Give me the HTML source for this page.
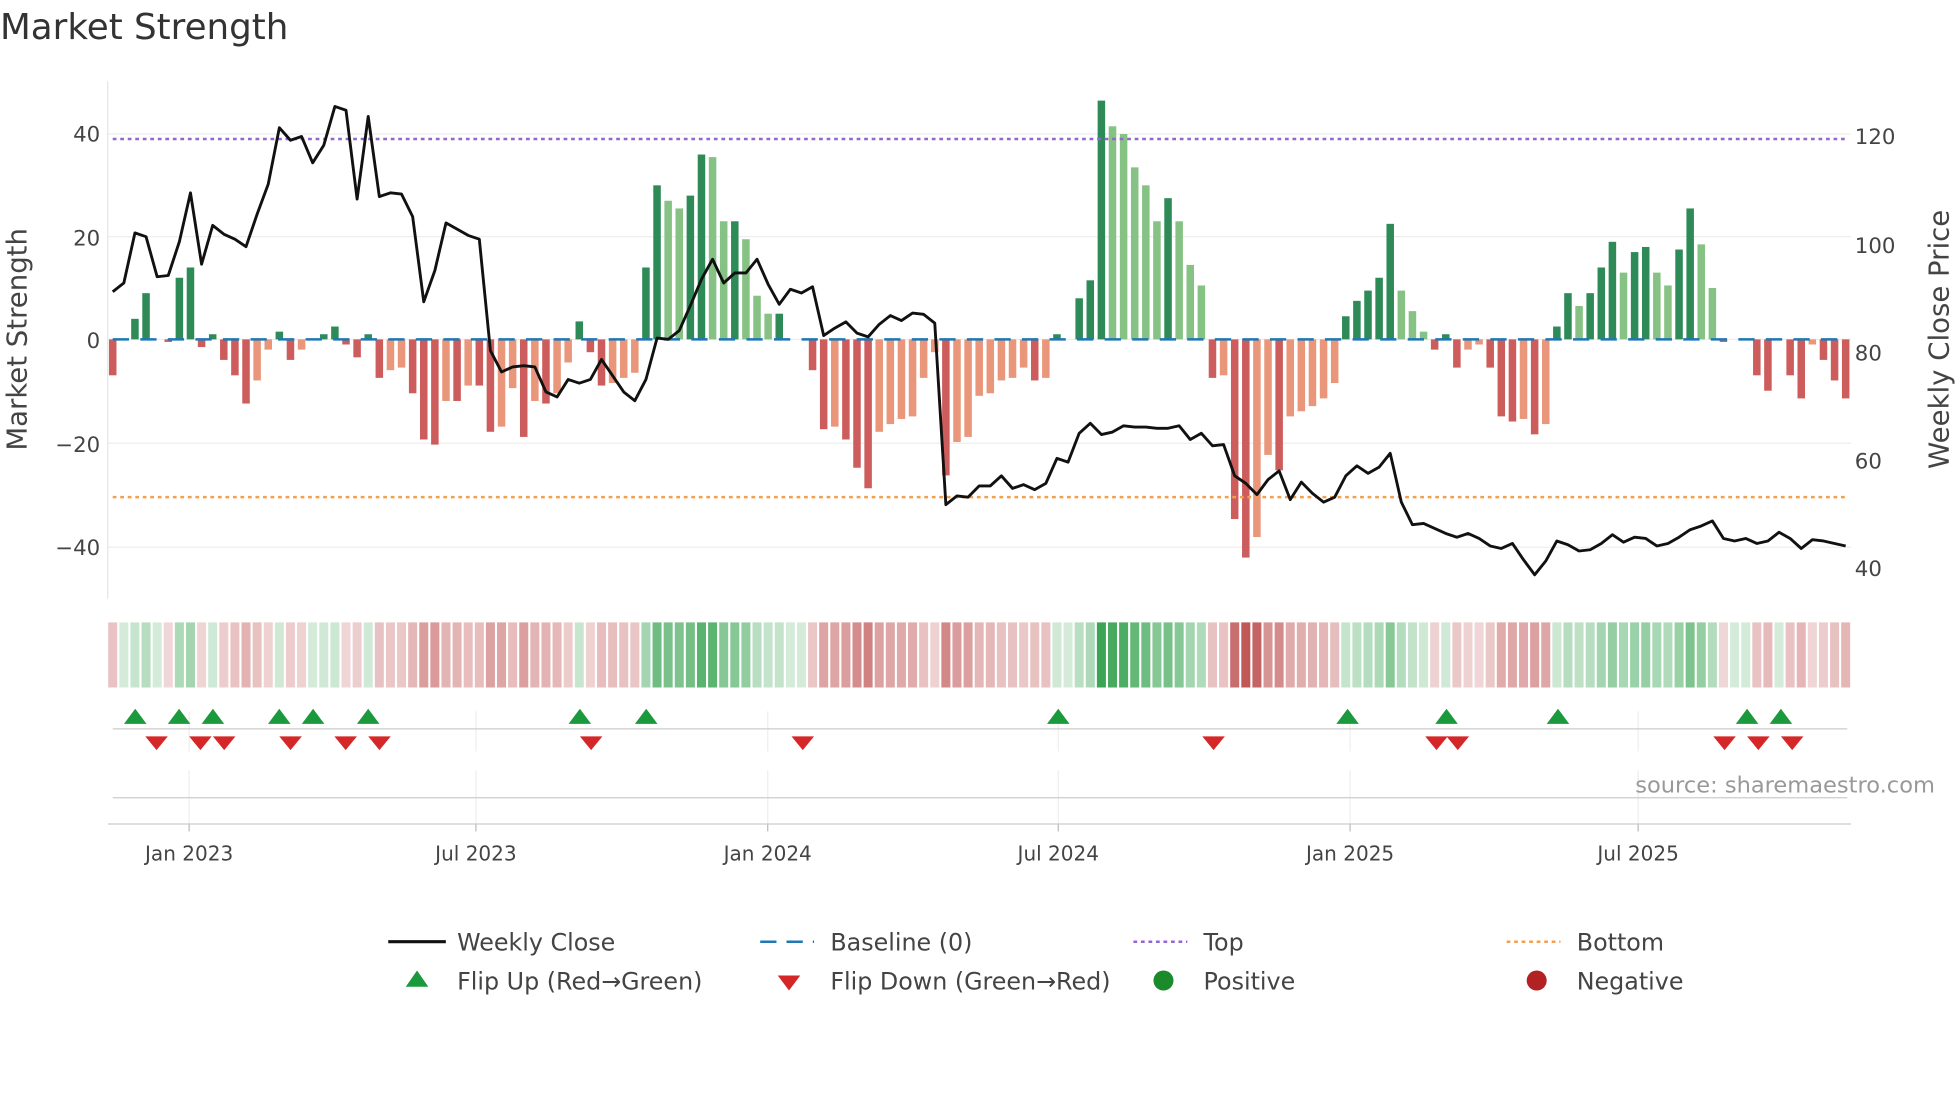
<!DOCTYPE html>
<html><head><meta charset="utf-8"><style>
html,body{margin:0;padding:0;background:#fff;width:1960px;height:1102px;overflow:hidden}
svg{display:block}
text{font-family:"DejaVu Sans","Liberation Sans",sans-serif}
</style></head><body>
<svg id="s" width="1960" height="1102" viewBox="0 0 1565 880" preserveAspectRatio="none" xmlns="http://www.w3.org/2000/svg">
<text x="0" y="31" font-size="28.5" fill="#333">Market Strength</text>
<g id="grid"></g>
<g id="bars"></g>
<g id="heat"></g>
<g id="marks"></g>
<text x="1545" y="633" font-size="18" fill="#999" text-anchor="end">source: sharemaestro.com</text>
<g font-size="17" fill="#444">
<text x="80" y="113" text-anchor="end">40</text>
<text x="80" y="196" text-anchor="end">20</text>
<text x="80" y="278" text-anchor="end">0</text>
<text x="80" y="361" text-anchor="end">−20</text>
<text x="80" y="443" text-anchor="end">−40</text>
<text x="1481" y="115">120</text>
<text x="1481" y="202">100</text>
<text x="1481" y="288">80</text>
<text x="1481" y="374">60</text>
<text x="1481" y="460">40</text>
</g>
<text transform="translate(21,271) rotate(-90)" font-size="22" fill="#444" text-anchor="middle">Market Strength</text>
<text transform="translate(1556,271) rotate(-90)" font-size="22" fill="#444" text-anchor="middle">Weekly Close Price</text>
<g font-size="16" fill="#444" text-anchor="middle">
<text x="151" y="687">Jan 2023</text><text x="380" y="687">Jul 2023</text><text x="613" y="687">Jan 2024</text>
<text x="845" y="687">Jul 2024</text><text x="1078" y="687">Jan 2025</text><text x="1308" y="687">Jul 2025</text>
</g>
<g font-size="19" fill="#444">
<line x1="310" y1="752" x2="356" y2="752" stroke="#111" stroke-width="2.5"/><text x="365" y="759">Weekly Close</text>
<line x1="607" y1="752" x2="650" y2="752" stroke="#1f77b4" stroke-width="2" stroke-dasharray="13,8"/><text x="663" y="759">Baseline (0)</text>
<line x1="905" y1="752" x2="948" y2="752" stroke="#9467d0" stroke-width="2" stroke-dasharray="3,3"/><text x="961" y="759">Top</text>
<line x1="1203" y1="752" x2="1246" y2="752" stroke="#f0a050" stroke-width="2" stroke-dasharray="3,3"/><text x="1259" y="759">Bottom</text>
<polygon points="324,788 342,788 333,775" fill="#1a9a3c"/><text x="365" y="790">Flip Up (Red→Green)</text>
<polygon points="621,779 639,779 630,791" fill="#d62728"/><text x="663" y="790">Flip Down (Green→Red)</text>
<circle cx="929" cy="783" r="8" fill="#1a8a2a"/><text x="961" y="790">Positive</text>
<circle cx="1227" cy="783" r="8" fill="#b22222"/><text x="1259" y="790">Negative</text>
</g>
</svg>
<script>
var NS="http://www.w3.org/2000/svg";
function el(p,t,a){var e=document.createElementNS(NS,t);for(var k in a)e.setAttribute(k,a[k]);document.getElementById(p).appendChild(e);return e;}
var V=[-7,0,4,9,0,-0.5,12,14,-1.5,1,-4,-7,-12.5,-8,-2,1.5,-4,-2,0,1,2.5,-1,-3.5,1,-7.5,-6,-5.5,-10.5,-19.5,-20.5,-12,-12,-9,-9,-18,-17,-9.5,-19,-12,-12.5,-10.5,-4.5,3.5,-2.5,-9,-8.5,-7.5,-6.5,14,30,27,25.5,28,36,35.5,23,23,19.5,8.5,5,5,0,0,-6,-17.5,-17,-19.5,-25,-29,-18,-16.5,-15.5,-15,-7.5,-2.5,-26.5,-20,-19,-11,-10.5,-8,-7.5,-5.5,-8,-7.5,1,0,8,11.5,46.5,41.5,40,33.5,30,23,27.5,23,14.5,10.5,-7.5,-7,-35,-42.5,-38.5,-22.5,-25.5,-15,-14,-13,-11.5,-8.5,4.5,7.5,9.5,12,22.5,9.5,5.5,1.5,-2,1,-5.5,-2,-1,-5.5,-15,-16,-15.5,-18.5,-16.5,2.5,9,6.5,9,14,19,13,17,18,13,10.5,17.5,25.5,18.5,10,-0.5,0,0,-7,-10,0,-7,-11.5,-1,-4,-8,-11.5];
var P=[233,226,186,189,221,220,193,154,211,180,187,191,197,171,147,102,112,109,130,116,85,88,159,93,157,154,155,173,241,216,178,183,188,191,280,297,293,292,293,313,317,303,306,303,287,300,313,320,303,270,271,264,244,223,207,226,218,218,207,227,243,231,234,229,268,262,257,266,269,259,252,256,250,251,258,403,396,397,388,388,380,390,387,391,386,366,369,346,338,347,345,340,341,341,342,342,340,351,346,356,355,380,386,395,383,376,399,385,394,401,397,380,372,378,373,362,401,419,418,422,426,429,426,430,436,438,434,447,459,448,432,435,440,439,434,427,433,429,430,436,434,429,423,420,416,430,432,430,434,432,425,430,438,431,432,434,436];
var X=function(i){return 90+i*8.87;};
[107,189,271,354,437].forEach(function(y){el("grid","line",{x1:86,x2:1478,y1:y,y2:y,stroke:"#eee","stroke-width":1});});
el("grid","line",{x1:86,x2:86,y1:65,y2:478,stroke:"#e6e6e6"});
[151,380,613,845,1078,1308].forEach(function(x){el("grid","line",{x1:x,x2:x,y1:568,y2:600,stroke:"#eee"});el("grid","line",{x1:x,x2:x,y1:615,y2:658,stroke:"#eee"});el("grid","line",{x1:x,x2:x,y1:658,y2:664,stroke:"#bbb"});});
el("grid","line",{x1:90,x2:1475,y1:582,y2:582,stroke:"#ccc"});
el("grid","line",{x1:90,x2:1475,y1:637,y2:637,stroke:"#ccc"});
el("grid","line",{x1:86,x2:1478,y1:658,y2:658,stroke:"#ccc"});
for(var i=0;i<V.length;i++){var v=V[i];if(v==0)continue;var prev=i>0?V[i-1]:0;var c;
 if(v>0)c=(v>=prev)?"#2e8b57":"#86c283";else c=(v<=prev)?"#cd5c5c":"#e9967a";
 var y0=271,h=Math.abs(v)*4.1;el("bars","rect",{x:X(i)-3,y:v>0?y0-h:y0,width:6,height:h,fill:c});}
el("bars","line",{x1:90,x2:1475,y1:271,y2:271,stroke:"#1f77b4","stroke-width":2,"stroke-dasharray":"13,9"});
el("bars","line",{x1:90,x2:1475,y1:111,y2:111,stroke:"#9467d0","stroke-width":2,"stroke-dasharray":"3,3"});
el("bars","line",{x1:90,x2:1475,y1:397,y2:397,stroke:"#f0a050","stroke-width":2,"stroke-dasharray":"3,3"});
el("bars","polyline",{points:P.map(function(y,i){return X(i)+","+y;}).join(" "),fill:"none",stroke:"#111","stroke-width":2.3,"stroke-linejoin":"round"});
for(var i=0;i<V.length;i++){var v=V[i],a=0.22+0.78*Math.min(Math.abs(v)/45,1);
 var c=v>=0?"rgba(60,165,85,"+a+")":"rgba(190,80,80,"+a+")";
 el("heat","rect",{x:X(i)-3.6,y:497,width:7.2,height:52,fill:c});}
[108,143,170,223,250,294,463,516,845,1076,1155,1244,1395,1422].forEach(function(x){el("marks","polygon",{points:(x-9)+",578 "+(x+9)+",578 "+x+",566",fill:"#1a9a3c"});});
[125,160,179,232,276,303,472,641,969,1147,1164,1377,1404,1431].forEach(function(x){el("marks","polygon",{points:(x-9)+",588 "+(x+9)+",588 "+x+",599",fill:"#d62728"});});
</script>
</body></html>
